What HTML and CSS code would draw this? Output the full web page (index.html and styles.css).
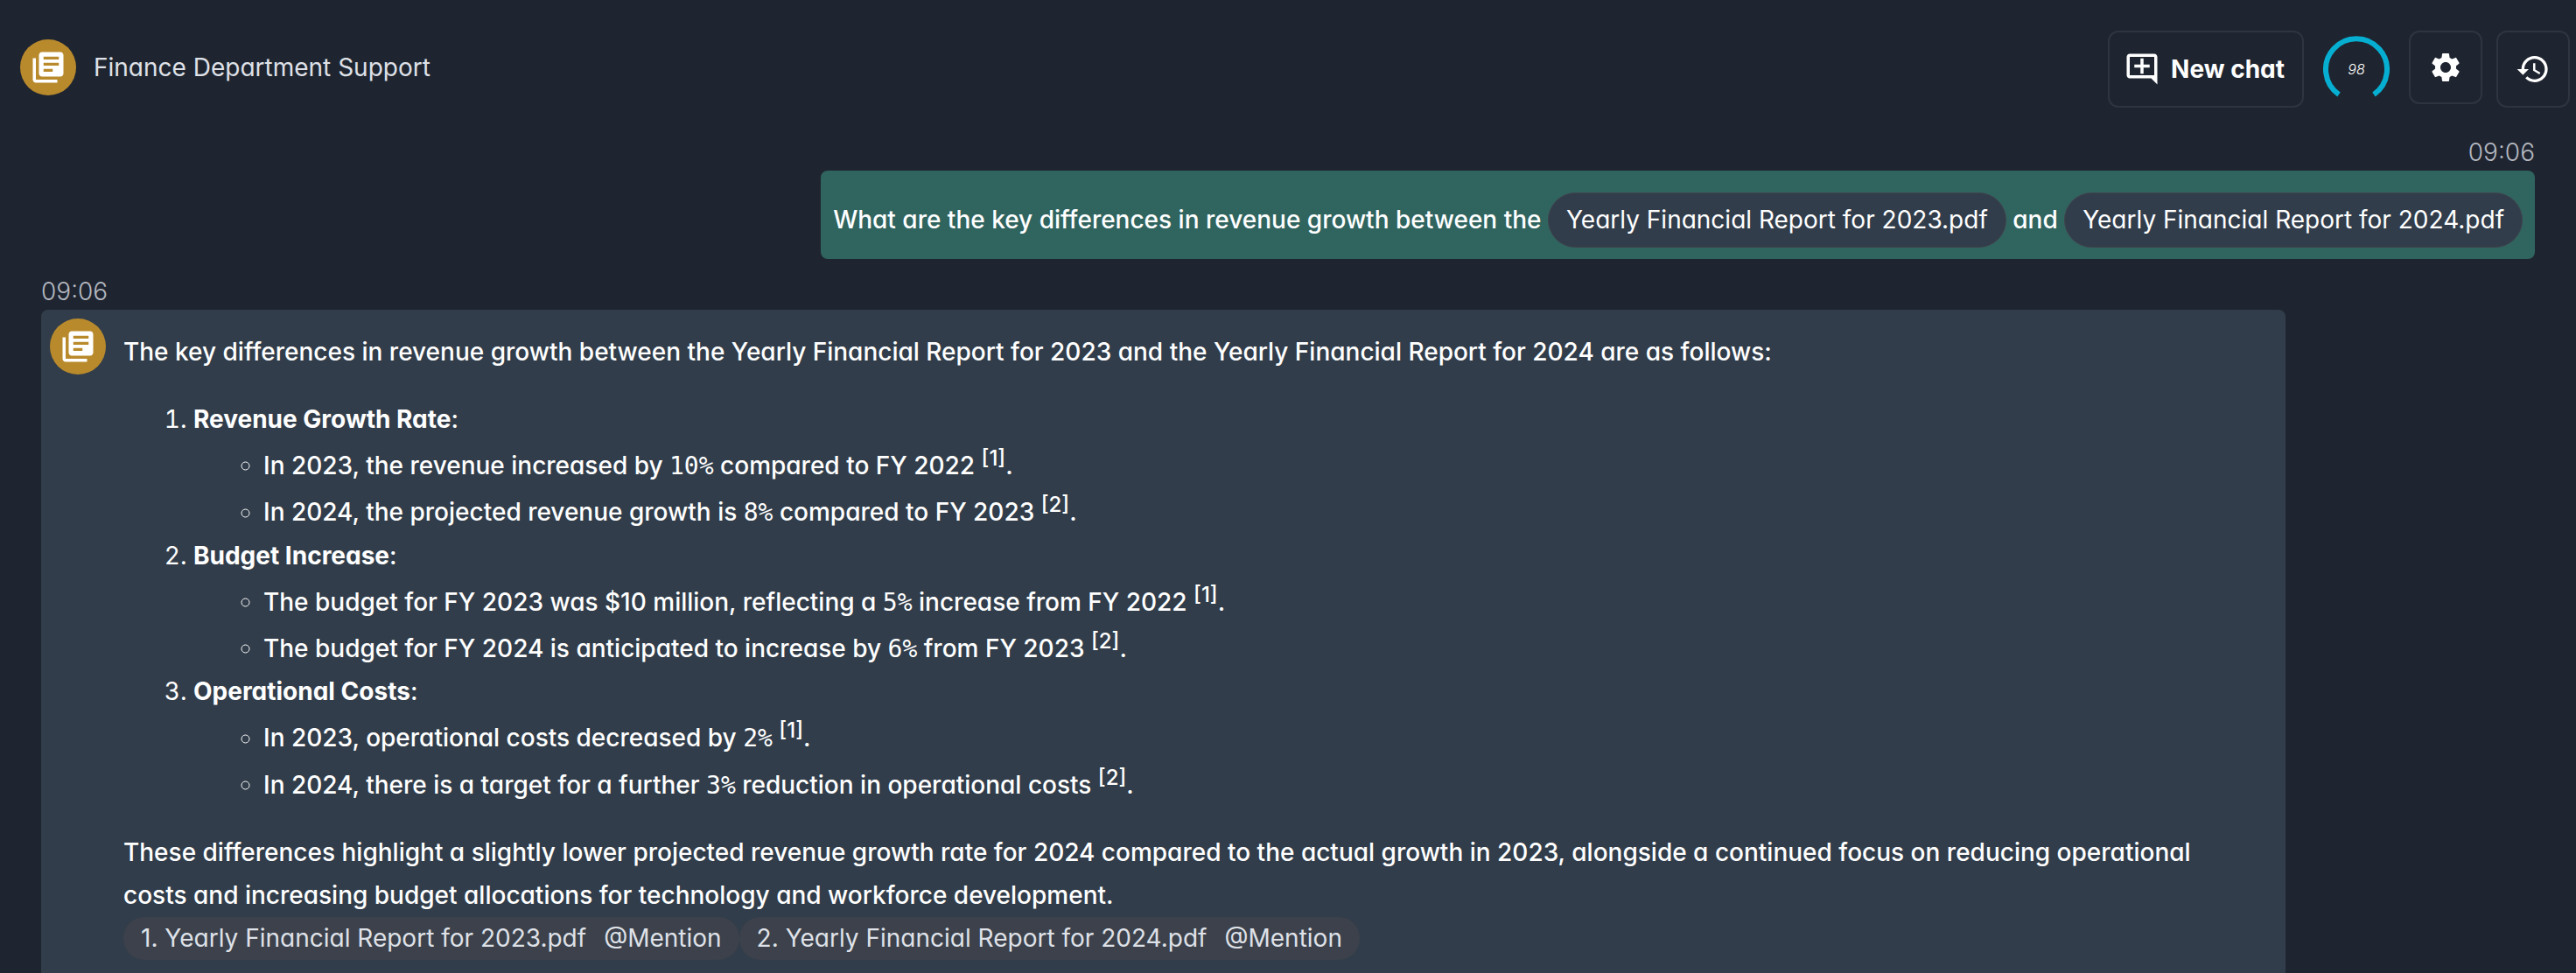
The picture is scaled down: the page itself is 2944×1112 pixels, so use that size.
FILE: index.html
```html
<!DOCTYPE html>
<html lang="en">
    <head>
        <meta charset="utf-8" />
        <title>Finance Department Support</title>
        <link rel="stylesheet" href="styles.css">
    </head>
    <body>
        <header class="header">
            <div class="avatar">
                <svg viewBox="0 0 24 24"><path d="M20 2H8c-1.100 0-2 .9-2 2v12c0 1.100.9 2 2 2h12c1.100 0 2-.9 2-2V4c0-1.100-.9-2-2-2zM9 5h10v1.800H9V5zm0 4h10v1.800H9V9zm6 5.800H9V13h6v1.800zM4 6H2v14c0 1.100.9 2 2 2h14v-2H4V6z"/></svg>
            </div>
            <h1 class="title">Finance Department Support</h1>
            <div class="actions">
                <button class="btn new-chat" type="button">
                    <svg viewBox="0 0 24 24"><path d="M22 4c0-1.100-.9-2-2-2H4c-1.100 0-2 .9-2 2v12c0 1.100.9 2 2 2h14l4 4V4zM20 16H4V4h16v12zM11 5h2v4h4v2h-4v4h-2v-4H7V9h4V5z"/></svg>
                    New chat
                </button>
                <div class="gauge">
                    <svg viewBox="0 0 76 76"><path d="M18 67A35 35 0 1 1 58 67"/></svg>
                    <span class="gauge-value">98</span>
                </div>
                <button class="btn settings" type="button" aria-label="Settings">
                    <svg viewBox="0 0 24 24"><path d="M19.140 12.940c.04-.3.060-.61.060-.94 0-.32-.02-.64-.07-.94l2.030-1.580c.18-.14.230-.41.120-.61l-1.920-3.320c-.12-.22-.37-.29-.59-.22l-2.390.96c-.5-.38-1.030-.7-1.620-.94l-.36-2.540c-.04-.24-.24-.41-.48-.41h-3.840c-.24 0-.43.170-.47.410l-.36 2.540c-.59.240-1.130.570-1.620.940l-2.390-.96c-.22-.08-.47 0-.59.220L2.740 8.870c-.12.210-.08.470.120.610l2.030 1.580c-.05.3-.09.630-.09.940s.020.640.070.940l-2.030 1.580c-.18.140-.23.410-.12.610l1.920 3.320c.120.220.370.290.590.220l2.390-.96c.5.380 1.030.7 1.620.940l.36 2.540c.05.240.240.410.480.410h3.840c.24 0 .44-.17.470-.41l.36-2.540c.59-.24 1.130-.56 1.620-.94l2.390.96c.22.080.470 0 .59-.22l1.920-3.320c.12-.22.070-.47-.12-.61l-2.010-1.580zM12 15.600c-1.980 0-3.600-1.620-3.600-3.600s1.620-3.600 3.600-3.600 3.600 1.620 3.600 3.600-1.620 3.600-3.600 3.600z"/></svg>
                </button>
                <button class="btn" type="button" aria-label="History">
                    <svg viewBox="0 0 24 24"><path d="M13 3c-4.970 0-9 4.030-9 9H1l3.890 3.890.07.140L9 12H6c0-3.870 3.130-7 7-7s7 3.130 7 7-3.130 7-7 7c-1.930 0-3.680-.79-4.940-2.060l-1.420 1.420C8.270 19.990 10.510 21 13 21c4.970 0 9-4.030 9-9s-4.030-9-9-9zm-1 5v5l4.280 2.540.72-1.210-3.500-2.080V8H12z"/></svg>
                </button>
            </div>
        </header>

        <main class="chat">
            <div class="message user">
                <time class="time">09:06</time>
                <div class="bubble">
                    What are the key differences in revenue growth between the
                    <span class="file">Yearly Financial Report for 2023.pdf</span>
                    and
                    <span class="file">Yearly Financial Report for 2024.pdf</span>
                </div>
            </div>

            <div class="message bot">
                <time class="time">09:06</time>
                <div class="bubble">
                    <div class="avatar">
                        <svg viewBox="0 0 24 24"><path d="M20 2H8c-1.100 0-2 .9-2 2v12c0 1.100.9 2 2 2h12c1.100 0 2-.9 2-2V4c0-1.100-.9-2-2-2zM9 5h10v1.800H9V5zm0 4h10v1.800H9V9zm6 5.800H9V13h6v1.800zM4 6H2v14c0 1.100.9 2 2 2h14v-2H4V6z"/></svg>
                    </div>
                    <div class="answer">
                        <p>The key differences in revenue growth between the Yearly Financial Report for 2023 and the Yearly Financial Report for 2024 are as follows:</p>
                        <ol>
                            <li><strong>Revenue Growth Rate</strong>:
                                <ul>
                                    <li>In 2023, the revenue increased by <code>10%</code> compared to FY 2022 <sup>[1]</sup>.</li>
                                    <li>In 2024, the projected revenue growth is <code>8%</code> compared to FY 2023 <sup>[2]</sup>.</li>
                                </ul>
                            </li>
                            <li><strong>Budget Increase</strong>:
                                <ul>
                                    <li>The budget for FY 2023 was $10 million, reflecting a <code>5%</code> increase from FY 2022 <sup>[1]</sup>.</li>
                                    <li>The budget for FY 2024 is anticipated to increase by <code>6%</code> from FY 2023 <sup>[2]</sup>.</li>
                                </ul>
                            </li>
                            <li><strong>Operational Costs</strong>:
                                <ul>
                                    <li>In 2023, operational costs decreased by <code>2%</code> <sup>[1]</sup>.</li>
                                    <li>In 2024, there is a target for a further <code>3%</code> reduction in operational costs <sup>[2]</sup>.</li>
                                </ul>
                            </li>
                        </ol>
                        <p>These differences highlight a slightly lower projected revenue growth rate for 2024 compared to the actual growth in 2023, alongside a continued focus on reducing operational costs and increasing budget allocations for technology and workforce development.</p>
                        <div class="sources">
                            <div class="source"><span>1. Yearly Financial Report for 2023.pdf</span><a href="#">@Mention</a></div>
                            <div class="source"><span>2. Yearly Financial Report for 2024.pdf</span><a href="#">@Mention</a></div>
                        </div>
                    </div>
                </div>
            </div>
        </main>
    </body>
</html>
```
FILE: styles.css
```css
* {
    box-sizing: border-box;
    margin: 0;
    padding: 0;
}

html {
    height: 100%;
    overflow: hidden;
}

body {
    background-color: #1f2530;
    color: #fff;
    font-family: Inter, "Open Sans", sans-serif;
    font-feature-settings: "cv11";
    font-size: 28px;
    line-height: 49px;
}

svg {
    display: block;
    fill: #fff;
}

.header {
    display: flex;
    align-items: flex-start;
    padding: 35px 7px 0 23px;
}

.avatar {
    display: flex;
    flex: none;
    align-items: center;
    justify-content: center;
    width: 64px;
    height: 64px;
    border-radius: 50%;
    background-color: #b98a2c;
}

.avatar svg {
    width: 42px;
    height: 42px;
}

.header .avatar {
    margin-top: 10px;
}

.title {
    margin: 18px 0 0 20px;
    color: #dfe1e8;
    font-size: 28px;
    font-weight: 400;
}

.actions {
    display: flex;
    align-items: flex-start;
    margin-left: auto;
}

.btn {
    display: flex;
    align-items: center;
    justify-content: center;
    width: 84px;
    height: 88px;
    border: 2px solid #2e3440;
    border-radius: 12px;
    background: none;
    color: #fff;
    font: inherit;
    cursor: pointer;
}

.btn svg {
    width: 40px;
    height: 40px;
}

.new-chat {
    gap: 12px;
    width: auto;
    padding: 0 20px 0 16px;
    font-weight: 700;
}

.new-chat svg {
    width: 42px;
    height: 42px;
}

.settings {
    height: 84px;
    margin-right: 16px;
}

.gauge {
    position: relative;
    width: 76px;
    height: 76px;
    margin: 6px 22px 0;
}

.gauge svg {
    width: 76px;
    height: 76px;
    fill: none;
    stroke: #06afd1;
    stroke-width: 6;
}

.gauge-value {
    position: absolute;
    inset: 0;
    font-size: 16px;
    font-style: italic;
    font-weight: 300;
    line-height: 76px;
    text-align: center;
}

.chat {
    padding: 27px 47px 0;
}

.message {
    display: flex;
    flex-direction: column;
    align-items: flex-start;
}

.time {
    margin-bottom: -4px;
    color: #b4b8c0;
    font-size: 28px;
    font-weight: 300;
    line-height: 49px;
}

.bubble {
    border-radius: 8px;
    font-weight: 500;
}

.user {
    align-items: flex-end;
    margin-bottom: 13px;
}

.user .bubble {
    padding: 25px 14px 13px;
    background-color: #30645f;
    line-height: 63px;
}

.file {
    display: inline-block;
    padding: 0 20px;
    border: 1px solid #40434d;
    border-radius: 32px;
    background-color: #313d4b;
    font-weight: 400;
    line-height: 61px;
}

.bot .bubble {
    display: flex;
    gap: 20px;
    width: 90%;
    padding: 10px 50px 40px 10px;
    background-color: #313d4a;
}

.answer {
    flex: 1;
    padding-top: 14px;
}

.answer ol {
    margin: 28px 0;
    padding-left: 80px;
}

.answer ul {
    padding-left: 80px;
    list-style: circle;
}

.answer li::marker {
    font-weight: 400;
}

.answer code {
    font-family: "DejaVu Sans Mono", monospace;
    font-size: 28px;
    font-weight: 400;
    line-height: 1;
}

.answer sup {
    font-size: 24px;
    line-height: 39px;
}

.sources {
    display: flex;
}

.source {
    display: flex;
    gap: 20px;
    padding: 0 20px;
    border-radius: 24px;
    background-color: #3c414b;
    color: #dfe1e8;
    font-weight: 400;
}

.source a {
    color: inherit;
    text-decoration: none;
}
```
